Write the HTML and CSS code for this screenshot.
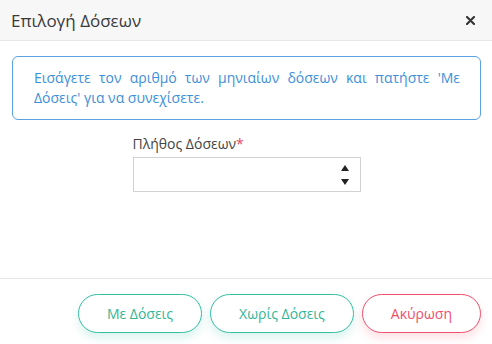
FILE: index.html
```html
<!DOCTYPE html>
<html lang="el">
<head>
  <meta charset="UTF-8"/>
  <meta name="viewport" content="width=device-width, initial-scale=1.0"/>
  <title>Επιλογή Δόσεων</title>
  <link rel="stylesheet" href="styles.css">
</head>
<body>
  <div class="modal">
    <div class="modal-header">
      <div class="title">Επιλογή Δόσεων</div>
      <button class="close">
        <svg width="9" height="9" viewBox="0 0 9 9">
          <path d="M1 1L8 8M8 1L1 8" stroke="#333" stroke-width="2.1" stroke-linecap="round"/>
        </svg>
      </button>
    </div>

    <div class="modal-body">
      <div class="alert">
        Εισάγετε τον αριθμό των μηνιαίων δόσεων και πατήστε 'Με Δόσεις' για να συνεχίσετε.
      </div>

      <div class="form-group">
        <label for="doseis">Πλήθος Δόσεων<span class="req">*</span></label>
        <div class="number-input">
          <input type="text" id="doseis"/>
          <div class="spin">
            <span class="up"></span>
            <span class="down"></span>
          </div>
        </div>
      </div>
    </div>

    <div class="modal-footer">
      <button class="btn btn-success">Με Δόσεις</button>
      <button class="btn btn-success">Χωρίς Δόσεις</button>
      <button class="btn btn-danger">Ακύρωση</button>
    </div>
  </div>
</body>
</html>
```

FILE: styles.css
```css
html, body {
  margin: 0; padding: 0;
  background: #fff;
  font-family: "Open Sans", "DejaVu Sans", sans-serif;
  color: #444;
}
.modal {
  width: 492px; height: 344px;
  display: flex; flex-direction: column;
}
.modal-header {
  height: 40px;
  display: flex; align-items: center;
  justify-content: space-between;
  padding: 0 11px;
  background: #f7f7f8;
  border-bottom: 1px solid #e6e6e8;
}
.modal-header .title {
  font-size: 17px; color: #3a3a3a;
}
.modal-header .close {
  display: flex;
  border: none; background: none;
  padding: 0; margin-right: 6px;
  cursor: pointer;
}
.modal-body {
  flex: 1;
  padding: 15px 11px 0 12px;
}
.alert {
  border: 1px solid #5aa3e0; border-radius: 6px;
  padding: 11px 20px 11px 21px;
  color: #3d8fd9;
  font-size: 14px; line-height: 20px;
  text-align: justify;
}
.form-group {
  width: 228px;
  margin: 14px auto 0;
}
.form-group label {
  display: block;
  font-size: 14px; line-height: 20px;
  color: #444;
  margin-bottom: 3px;
}
.form-group .req { color: #e2476a; }
.number-input {
  display: flex; align-items: center;
  height: 33px;
  border: 1px solid #d2d2d2;
}
.number-input input {
  flex: 1; min-width: 0;
  border: none; outline: none;
  height: 100%; padding: 0 10px;
  font: inherit; font-size: 14px;
}
.spin {
  display: flex; flex-direction: column;
  gap: 8px;
  margin-right: 11px;
}
.spin span {
  width: 0; height: 0;
  border-left: 4px solid transparent;
  border-right: 4px solid transparent;
}
.spin .up   { border-bottom: 6px solid #222; }
.spin .down { border-top: 6px solid #222; }
.modal-footer {
  display: flex; justify-content: flex-end;
  gap: 8px;
  padding: 15px 11px 11px;
  border-top: 1px solid #e6e6e8;
}
.btn {
  height: 39px;
  padding: 0 28px;
  border-radius: 20px;
  background: #fff;
  font: inherit; font-size: 14px;
  cursor: pointer;
}
.btn-success {
  border: 1px solid #34bfa3; color: #34b597;
  box-shadow: 0 5px 10px rgba(52,191,163,0.18);
}
.btn-danger {
  border: 1px solid #f0506c; color: #ee4f6b;
  box-shadow: 0 5px 10px rgba(244,81,108,0.18);
}
```
